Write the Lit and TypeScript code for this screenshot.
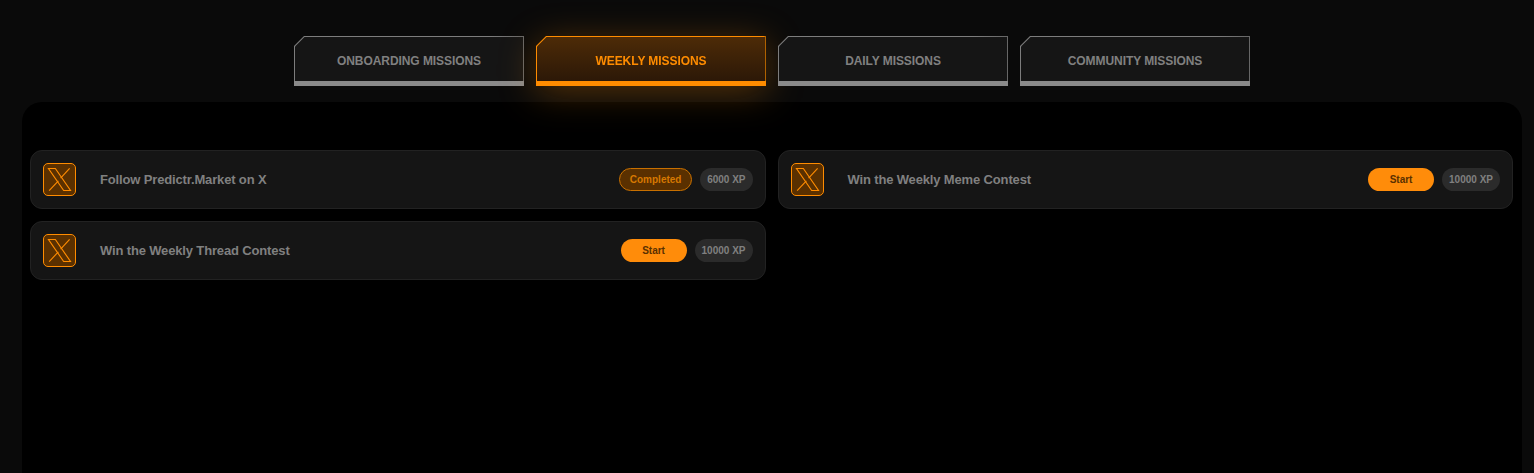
import { LitElement, html, css, svg } from "lit";
import { customElement } from "lit/decorators.js";

const xIcon = svg`<svg viewBox="0 0 24 24" width="27" height="27" fill="none" stroke="#ff8c00" stroke-width="1" stroke-linejoin="miter"><path d="M2.2 2.2H8.3L21.8 21.8H15.7Z"/><path d="M11 13.2 2.8 21.8"/><path d="M21 2.2 13 10.8"/></svg>`;

const tabs = ["ONBOARDING MISSIONS", "WEEKLY MISSIONS", "DAILY MISSIONS", "COMMUNITY MISSIONS"];
const missions = [
  { t: "Follow Predictr.Market on X", done: true, xp: "6000 XP" },
  { t: "Win the Weekly Meme Contest", done: false, xp: "10000 XP" },
  { t: "Win the Weekly Thread Contest", done: false, xp: "10000 XP" },
];

@customElement("app-root")
export class AppRoot extends LitElement {
  static styles = css`
    :host {
      display: block;
      height: 473px;
      overflow: hidden;
      background: #0a0a0a;
      font-family: "Liberation Sans", Arial, sans-serif;
    }
    .tabs {
      display: flex;
      justify-content: center;
      gap: 12px;
      padding: 36px 0 16px 10px;
    }
    .tab {
      width: 230px;
      height: 50px;
      box-sizing: border-box;
    }
    .tab.active {
      filter: drop-shadow(0 6px 18px rgba(255, 140, 0, 0.3));
    }
    .frame {
      position: relative;
      height: 100%;
      box-sizing: border-box;
      padding: 1px 1px 5px 1px;
      background: linear-gradient(90deg, #7d7d7d, #7d7d7d 85%, #666);
      clip-path: polygon(10px 0, 100% 0, 100% 100%, 0 100%, 0 10px);
    }
    .frame::after {
      content: "";
      position: absolute;
      left: 0;
      right: 0;
      bottom: 0;
      height: 5px;
      background: #8a8a8a;
    }
    .active .frame {
      background: linear-gradient(90deg, #ff8c00, #ff8c00 99%, #9a5600);
    }
    .active .frame::after {
      background: #ff8c00;
    }
    .inner {
      height: 100%;
      display: flex;
      align-items: center;
      justify-content: center;
      padding-top: 4px;
      box-sizing: border-box;
      background: #151515;
      color: #808080;
      font-size: 12px;
      font-weight: 700;
      letter-spacing: -0.07px;
      clip-path: polygon(9.5px 0, 100% 0, 100% 100%, 0 100%, 0 9.5px);
    }
    .active .inner {
      background: linear-gradient(180deg, #4d2b07, #2c1807);
      color: #ff8c00;
    }
    .panel {
      margin: 0 12px 0 22px;
      height: 400px;
      background: #000;
      border-radius: 20px;
      box-sizing: border-box;
      padding: 48px 9px 0 8px;
      display: grid;
      grid-template-columns: 1fr 1fr;
      gap: 12px;
      align-content: start;
    }
    .card {
      height: 59px;
      box-sizing: border-box;
      background: #151515;
      border: 1px solid #222;
      border-radius: 12px;
      display: flex;
      align-items: center;
      padding: 0 12px;
    }
    .icon {
      width: 33px;
      height: 33px;
      box-sizing: border-box;
      flex: none;
      background: #5a3000;
      border: 1px solid #ff8c00;
      border-radius: 5px;
      display: flex;
      align-items: center;
      justify-content: center;
    }
    .title {
      margin-left: 24px;
      flex: 1;
      color: #808080;
      font-size: 13px;
      font-weight: 700;
      letter-spacing: -0.15px;
    }
    .btn {
      width: 66px;
      height: 23px;
      border-radius: 12px;
      background: #ff8c0a;
      color: #5a3000;
      font-size: 10px;
      font-weight: 700;
      display: flex;
      align-items: center;
      justify-content: center;
      margin-right: 8px;
    }
    .btn.done {
      width: 73px;
      box-sizing: border-box;
      background: #5a3000;
      border: 1px solid #c87000;
      color: #d67800;
    }
    .xp {
      height: 23px;
      padding: 0 7px;
      border-radius: 12px;
      background: #2b2b2b;
      color: #808080;
      font-size: 10px;
      font-weight: 700;
      display: flex;
      align-items: center;
    }
  `;

  render() {
    return html`
      <div class="tabs">
        ${tabs.map(
          (t, i) => html`<div class="tab ${i === 1 ? "active" : ""}">
            <div class="frame"><div class="inner">${t}</div></div>
          </div>`
        )}
      </div>
      <div class="panel">
        ${missions.map(
          (m) => html`<div class="card">
            <div class="icon">${xIcon}</div>
            <div class="title">${m.t}</div>
            <div class="btn ${m.done ? "done" : ""}">${m.done ? "Completed" : "Start"}</div>
            <div class="xp">${m.xp}</div>
          </div>`
        )}
      </div>
    `;
  }
}
